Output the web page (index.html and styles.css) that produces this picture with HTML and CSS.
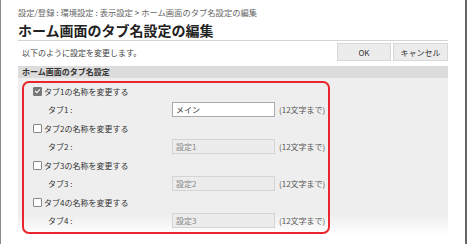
FILE: index.html
```html
<!DOCTYPE html>
<html lang="ja">
<head>
    <meta charset="UTF-8">
    <title>ホーム画面のタブ名設定の編集</title>
    <link rel="stylesheet" href="styles.css">
</head>
<body>
    <div class="window">
        <div class="breadcrumb">設定/登録 : 環境設定 : 表示設定 &gt; ホーム画面のタブ名設定の編集</div>
        <h1 class="title">ホーム画面のタブ名設定の編集</h1>
        <div class="toolbar">
            <p class="message">以下のように設定を変更します。</p>
            <div class="buttons">
                <button class="btn btn-ok">OK</button>
                <button class="btn">キャンセル</button>
            </div>
        </div>
        <div class="section-head">ホーム画面のタブ名設定</div>
        <div class="section-body">
            <div class="highlight">
                <div class="tab-row">
                    <label class="check"><span class="box checked"></span>タブ1の名称を変更する</label>
                    <div class="field">
                        <span class="field-label">タブ1 :</span>
                        <span class="input">メイン</span>
                        <span class="hint">(12文字まで)</span>
                    </div>
                </div>
                <div class="tab-row">
                    <label class="check"><span class="box"></span>タブ2の名称を変更する</label>
                    <div class="field">
                        <span class="field-label">タブ2 :</span>
                        <span class="input disabled">設定1</span>
                        <span class="hint">(12文字まで)</span>
                    </div>
                </div>
                <div class="tab-row">
                    <label class="check"><span class="box"></span>タブ3の名称を変更する</label>
                    <div class="field">
                        <span class="field-label">タブ3 :</span>
                        <span class="input disabled">設定2</span>
                        <span class="hint">(12文字まで)</span>
                    </div>
                </div>
                <div class="tab-row">
                    <label class="check"><span class="box"></span>タブ4の名称を変更する</label>
                    <div class="field">
                        <span class="field-label">タブ4 :</span>
                        <span class="input disabled">設定3</span>
                        <span class="hint">(12文字まで)</span>
                    </div>
                </div>
            </div>
            <div class="tab-row faded">
                <label class="check"><span class="box"></span>タブ5の名称を変更する</label>
            </div>
        </div>
        <div class="fade"></div>
    </div>
</body>
</html>
```

FILE: styles.css
```css
body {
    margin: 0;
    font-family: "Noto Sans CJK JP", "Noto Sans", sans-serif;
    color: #333;
    background: #fff;
    overflow: hidden;
}

.window {
    position: relative;
    height: 244px;
    box-sizing: border-box;
    padding: 6px 17px 0 17px;
    border-left: 1px solid #8a8a8a;
    border-right: 2px solid #666;
    overflow: hidden;
}

.breadcrumb {
    font-size: 8.3px;
    line-height: 12px;
    color: #666;
}

.title {
    margin: 3px 0 0;
    font-size: 14px;
    line-height: 18px;
    font-weight: bold;
    color: #222;
    padding-bottom: 1px;
    border-bottom: 1px solid #d4d4d4;
}

.toolbar {
    display: flex;
    justify-content: space-between;
    align-items: center;
    margin-top: 2px;
}

.message {
    margin: 0;
    padding-left: 4px;
    font-size: 8px;
    color: #444;
}

.buttons {
    display: flex;
    gap: 2px;
}

.btn {
    width: 55px;
    height: 18px;
    padding: 0;
    font-family: inherit;
    font-size: 8px;
    color: #333;
    background: #ececec;
    border: 1px solid #d8d8d8;
}

.btn-ok {
    width: 54px;
}

.section-head {
    margin-top: 5px;
    height: 12px;
    line-height: 12px;
    padding-left: 4px;
    font-size: 8px;
    font-weight: bold;
    color: #333;
    background: #dcdcdc;
}

.section-body {
    background: #eeeeee;
    padding: 3px 0 0 4px;
    height: 200px;
}

.highlight {
    position: relative;
    z-index: 2;
    width: 304px;
    border: 2px solid #e8262b;
    border-radius: 7px;
    padding: 0 0 1px;
}

.tab-row {
    height: 37px;
}

.check {
    display: flex;
    align-items: center;
    height: 17px;
    padding-left: 9px;
    font-size: 8px;
    color: #333;
}

.box {
    width: 7px;
    height: 7px;
    margin-right: 2px;
    border: 1px solid #888;
    border-radius: 1px;
    background: #fff;
}

.box.checked {
    background: #777;
    border-color: #777;
    position: relative;
}

.box.checked::after {
    content: "";
    position: absolute;
    left: 2px;
    top: 0;
    width: 2px;
    height: 4px;
    border: solid #fff;
    border-width: 0 1px 1px 0;
    transform: rotate(45deg);
}

.field {
    display: flex;
    align-items: center;
    height: 18px;
    font-size: 8px;
}

.field-label {
    width: 124px;
    padding-left: 24px;
    color: #333;
}

.input {
    box-sizing: border-box;
    width: 103px;
    height: 15px;
    line-height: 13px;
    padding-left: 3px;
    border: 1px solid #aaa;
    background: #fff;
    color: #333;
}

.input.disabled {
    border-color: #d4d4d4;
    background: #ececec;
    color: #888;
}

.hint {
    margin-left: 4px;
    color: #555;
}

.faded {
    margin-top: 0;
}

.fade {
    position: absolute;
    z-index: 1;
    left: 0;
    right: 0;
    bottom: 0;
    height: 30px;
    background: linear-gradient(rgba(255, 255, 255, 0), #fff 70%);
}
```
